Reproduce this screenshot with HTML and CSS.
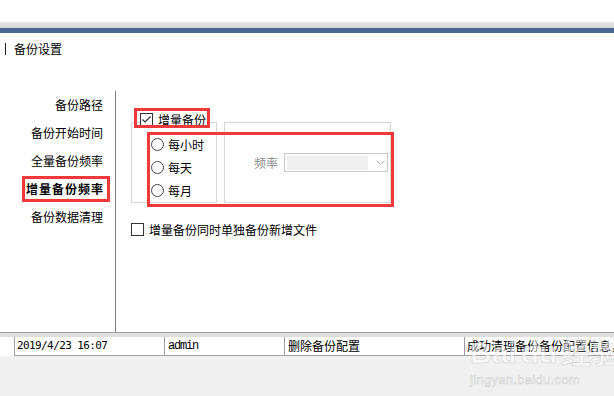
FILE: index.html
```html
<!DOCTYPE html>
<html lang="zh">
<head>
<meta charset="utf-8">
<title>备份设置</title>
<link rel="stylesheet" href="styles.css">
</head>
<body>
<div class="page">
  <div class="topspace"></div>
  <div class="band-grey"></div>
  <div class="band-blue"></div>
  <div class="title"><span class="title-bar"></span><span>备份设置</span></div>
  <div class="main">
    <nav class="nav">
      <div class="nav-item">备份路径</div>
      <div class="nav-item">备份开始时间</div>
      <div class="nav-item">全量备份频率</div>
      <div class="nav-item nav-item-active"><span class="nav-active">增量备份频率</span></div>
      <div class="nav-item">备份数据清理</div>
    </nav>
    <section class="content">
      <div class="groups">
        <fieldset class="group-left">
          <legend class="legend">
            <span class="legend-inner">
              <svg class="box" width="13" height="13" viewBox="0 0 13 13"><rect x="0.5" y="0.5" width="12" height="12" fill="#fff" stroke="#333"/><polyline points="2.5,6.5 5,9 10.5,3.5" fill="none" stroke="#333" stroke-width="1.2"/></svg>
              <span>增量备份</span>
            </span>
          </legend>
          <div class="radios">
            <div class="radio-row"><svg width="13" height="13" viewBox="0 0 13 13"><circle cx="6.5" cy="6.5" r="6" fill="#fff" stroke="#444"/></svg><span>每小时</span></div>
            <div class="radio-row"><svg width="13" height="13" viewBox="0 0 13 13"><circle cx="6.5" cy="6.5" r="6" fill="#fff" stroke="#444"/></svg><span>每天</span></div>
            <div class="radio-row"><svg width="13" height="13" viewBox="0 0 13 13"><circle cx="6.5" cy="6.5" r="6" fill="#fff" stroke="#444"/></svg><span>每月</span></div>
          </div>
        </fieldset>
        <div class="group-right">
          <span class="freq-label">频率</span>
          <div class="select">
            <div class="select-fill"></div>
            <svg class="chev" width="9" height="5" viewBox="0 0 9 5"><polyline points="0.5,0.5 4.5,4.5 8.5,0.5" fill="none" stroke="#b4b4b4"/></svg>
          </div>
        </div>
      </div>
      <div class="check-row">
        <svg width="13" height="13" viewBox="0 0 13 13"><rect x="0.5" y="0.5" width="12" height="12" fill="#fff" stroke="#333"/></svg>
        <span>增量备份同时单独备份新增文件</span>
      </div>
      <div class="mark mark-check"></div>
      <div class="mark mark-group"></div>
    </section>
  </div>
  <div class="grid">
    <div class="grid-head"></div>
    <div class="grid-row">
      <div class="cell c0"></div>
      <div class="cell c1">2019/4/23 16:07</div>
      <div class="cell c2">admin</div>
      <div class="cell c3">删除备份配置</div>
      <div class="cell c4">成功清理备份备份配置信息，</div>
    </div>
    <div class="grid-rest"></div>
    <div class="watermark">
      <div class="wm-big">Bai<span class="wm-du">du</span>经验</div>
      <div class="wm-small">jingyan.baidu.com</div>
    </div>
  </div>
</div>
</body>
</html>
```

FILE: styles.css
```css
* { box-sizing: border-box; }
html, body { margin: 0; padding: 0; }
body {
  width: 614px;
  height: 396px;
  overflow: hidden;
  background: #fff;
  font-family: "Noto Sans CJK SC", "Liberation Sans", sans-serif;
  font-size: 12px;
  color: #000;
}
.page { display: flex; flex-direction: column; height: 396px; }
.topspace { height: 22px; background: #fff; }
.band-grey { height: 6px; background: linear-gradient(#e4e4e4, #d8d8d8); }
.band-blue { height: 5px; background: #4a6890; }

.title {
  height: 58px;
  padding: 8px 0 0 5px;
  display: flex;
  align-items: center;
  align-self: flex-start;
  line-height: 16px;
  gap: 8px;
}
.title .title-bar { width: 1px; height: 12px; background: #222; }
.title { height: 58px; align-items: flex-start; }
.title .title-bar { margin-top: 2px; }

.main { display: flex; height: 241px; }
.nav {
  width: 116px;
  border-right: 1px solid #7f7f7f;
  display: flex;
  flex-direction: column;
}
.nav-item {
  height: 28px;
  line-height: 28px;
  padding-right: 12px;
  text-align: right;
  white-space: nowrap;
}
.nav-item-active {
  padding-right: 5px;
  display: flex;
  justify-content: flex-end;
  align-items: center;
}
.nav-active {
  display: inline-block;
  border: 3px solid #f0393b;
  height: 26px;
  line-height: 20px;
  padding: 0 3px 0 1px;
  font-weight: bold;
  letter-spacing: 1px;
}

.content { position: relative; flex: 1; padding: 22px 0 0 15px; }
.groups { display: flex; align-items: flex-start; gap: 7px; }

.group-left {
  margin: 0;
  width: 86px;
  min-width: 0;
  padding: 0 0 0 8px;
  border: 1px solid #d6d6d6;
}
.legend { padding: 0; margin: 0; height: 18px; }
.legend-inner {
  display: flex;
  align-items: flex-start;
  gap: 5px;
  height: 18px;
  line-height: 14px;
  white-space: nowrap;
  background: #fff;
}
.legend-inner svg { display: block; }
.radios { margin: 2px 0 0 11px; display: flex; flex-direction: column; }
.radio-row {
  height: 23px;
  display: flex;
  align-items: center;
  gap: 4px;
  white-space: nowrap;
}
.radio-row svg { display: block; flex: none; }

.group-right {
  margin-top: 9px;
  width: 167px;
  height: 81px;
  border: 1px solid #d6d6d6;
  display: flex;
  align-items: center;
  padding-left: 29px;
}
.freq-label { color: #8c8c8c; margin-right: 6px; white-space: nowrap; }
.select {
  width: 104px;
  height: 19px;
  border: 1px solid #c8c8c8;
  display: flex;
  align-items: center;
  padding-left: 2px;
}
.select-fill { width: 81px; height: 14px; background: #efefef; }
.chev { display: block; margin-left: 8px; }

.check-row {
  margin-top: 20px;
  display: flex;
  align-items: center;
  gap: 5px;
  height: 13px;
  white-space: nowrap;
}
.check-row svg { display: block; flex: none; }

.mark { position: absolute; border: 3px solid #f0393b; }
.mark-check { left: 18px; top: 17px; width: 76px; height: 20px; }
.mark-group { left: 31px; top: 41px; width: 247px; height: 75px; }

.grid {
  position: relative;
  flex: 1;
  border-top: 1px solid #a0a0a0;
  display: flex;
  flex-direction: column;
  background: #f0f0f0;
}
.grid-head { height: 4px; background: #dedede; }
.grid-row {
  display: grid;
  grid-template-columns: 14px 150px 120px 180px 1fr;
  height: 19px;
  background: #fff;
}
.cell {
  border-left: 1px solid #a0a0a0;
  border-bottom: 1px solid #a0a0a0;
  line-height: 18px;
  white-space: nowrap;
  overflow: hidden;
  padding-left: 3px;
}
.c0 { border: none; }
.c1 { padding-left: 2px; font-family: "DejaVu Sans Mono", monospace; font-size: 11px; letter-spacing: -0.6px; }
.c2 { font-family: "Liberation Mono", monospace; font-size: 12px; letter-spacing: -1.2px; }
.c4 { padding-left: 2px; }
.grid-rest { flex: 1; }

.watermark {
  position: absolute;
  left: 470px;
  top: 2px;
  color: rgba(255, 255, 255, 0.55);
  -webkit-text-stroke: 0.6px rgba(170, 170, 170, 0.45);
  pointer-events: none;
}
.wm-big {
  font-family: "Liberation Sans", "Noto Sans CJK SC", sans-serif;
  font-weight: bold;
  font-size: 30px;
  line-height: 36px;
  white-space: nowrap;
}
.wm-du { margin: 0 4px; }
.wm-small {
  font-family: "Liberation Sans", sans-serif;
  font-size: 13px;
  line-height: 14px;
  margin-top: 2px;
  letter-spacing: 0.3px;
}
```
